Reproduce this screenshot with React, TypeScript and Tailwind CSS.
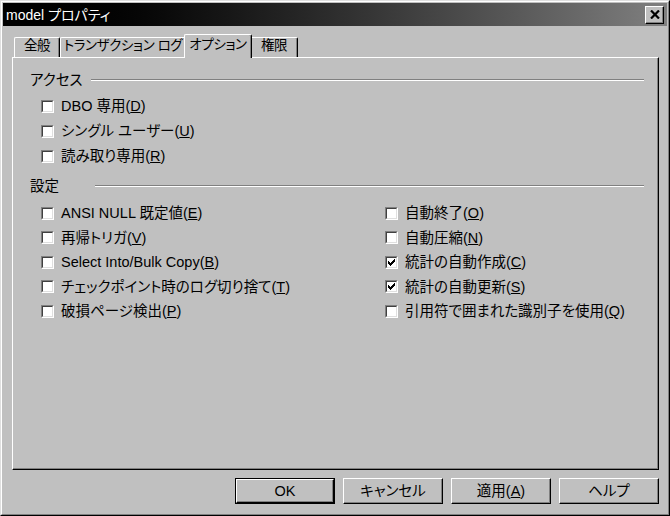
import React from 'react';

const Check: React.FC<{ checked?: boolean }> = ({ checked }) => (
  <span className="flex w-[13px] h-[13px] shrink-0 border border-t-[#808080] border-l-[#808080] border-r-white border-b-white">
    <span className="flex flex-1 items-center justify-center bg-white border border-t-[#404040] border-l-[#404040] border-r-[#dfdfdf] border-b-[#dfdfdf]">
      {checked && (
        <svg width="7" height="7" viewBox="0 0 7 7" shapeRendering="crispEdges">
          <path d="M0 2 L2 4 L6 0 L7 0 L7 3 L2 7 L0 5 Z" fill="#000" />
        </svg>
      )}
    </span>
  </span>
);

const Row: React.FC<{ checked?: boolean; h: string; children: React.ReactNode }> = ({ checked, h, children }) => (
  <div className={`flex items-center ${h}`}>
    <Check checked={checked} />
    <span className="ml-[7px] whitespace-nowrap">{children}</span>
  </div>
);

const GroupHeader: React.FC<{ label: string; lineLeft: string }> = ({ label, lineLeft }) => (
  <div className="flex items-center h-[16px]">
    <span className="whitespace-nowrap">{label}</span>
    <div className={`flex-1 ${lineLeft} border-t border-t-[#808080] border-b border-b-white`} />
  </div>
);

const Tab: React.FC<{ label: string; w: string; selected?: boolean }> = ({ label, w, selected }) =>
  selected ? (
    <div className={`relative z-10 -mx-[2px] -mb-[1px] h-[24px] ${w} flex items-start justify-center pt-[3px] whitespace-nowrap bg-[#c0c0c0] border-l border-t border-l-white border-t-white border-r border-r-black shadow-[inset_-1px_0_#808080] rounded-tl-[2px] rounded-tr-[2px]`}>
      {label}
    </div>
  ) : (
    <div className={`h-[20px] ${w} flex items-start justify-center pt-[1px] whitespace-nowrap border-l border-t border-l-white border-t-white border-r border-r-black shadow-[inset_-1px_0_#808080] rounded-tl-[2px] rounded-tr-[2px]`}>
      {label}
    </div>
  );

const Button: React.FC<{ children: React.ReactNode; isDefault?: boolean }> = ({ children, isDefault }) =>
  isDefault ? (
    <div className="flex w-[100px] h-[26px] border border-black">
      <div className="flex flex-1 items-center justify-center border border-t-white border-l-white border-r-black border-b-black shadow-[inset_-1px_-1px_#808080]">
        {children}
      </div>
    </div>
  ) : (
    <div className="flex w-[100px] h-[26px] items-center justify-center border border-t-white border-l-white border-r-black border-b-black shadow-[inset_-1px_-1px_#808080]">
      {children}
    </div>
  );

export default function App() {
  return (
    <div className="w-[670px] h-[516px] bg-[#c0c0c0] text-black text-[14.5px] leading-none [font-feature-settings:'palt'] font-['Liberation_Sans','Noto_Sans_CJK_JP','Noto_Sans_CJK_SC',sans-serif] border border-t-[#dfdfdf] border-l-[#dfdfdf] border-r-black border-b-black">
      <div className="flex flex-col h-full p-[1px] border border-t-white border-l-white border-r-[#808080] border-b-[#808080]">
        {/* title bar */}
        <div className="flex items-center h-[23px] pl-[3px] pr-[3px] bg-linear-to-r from-[#000000] to-[#808080]">
          <span className="text-white text-[14px] whitespace-nowrap">model プロパティ</span>
          <div className="ml-auto flex w-[19px] h-[18px] items-center justify-center bg-[#c0c0c0] border border-t-white border-l-white border-r-black border-b-black shadow-[inset_-1px_-1px_#808080]">
            <svg width="10" height="9" viewBox="0 0 10 9">
              <path d="M1 0.5 L9 8.5 M9 0.5 L1 8.5" stroke="#000" strokeWidth="2.2" />
            </svg>
          </div>
        </div>

        {/* tabs */}
        <div className="flex items-end h-[24px] mt-[7px] pl-[11px] text-[13.5px] tracking-[-0.4px]">
          <Tab label="全般" w="w-[46px]" />
          <Tab label="トランザクション ログ" w="w-[126px]" />
          <Tab label="オプション" w="w-[68px]" selected />
          <Tab label="権限" w="w-[48px]" />
        </div>

        {/* panel */}
        <div className="ml-[9px] mr-[8px] h-[413px] border border-t-white border-l-white border-r-black border-b-black shadow-[inset_-1px_-1px_#808080] pt-[14px] pl-[17px] pr-[14px]">
          <GroupHeader label="アクセス" lineLeft="ml-[8px]" />
          <div className="ml-[11px] mt-[6px]">
            <Row h="h-[25px]">DBO 専用(<u>D</u>)</Row>
            <Row h="h-[25px]">シングル ユーザー(<u>U</u>)</Row>
            <Row h="h-[25px]">読み取り専用(<u>R</u>)</Row>
          </div>

          <div className="mt-[9px]">
            <GroupHeader label="設定" lineLeft="ml-[36px]" />
          </div>
          <div className="ml-[11px] mt-[7px] grid grid-cols-[344px_1fr]">
            <div>
              <Row h="h-[24.5px]">ANSI NULL 既定値(<u>E</u>)</Row>
              <Row h="h-[24.5px]">再帰トリガ(<u>V</u>)</Row>
              <Row h="h-[24.5px]">Select Into/Bulk Copy(<u>B</u>)</Row>
              <Row h="h-[24.5px]">チェックポイント時のログ切り捨て(<u>T</u>)</Row>
              <Row h="h-[24.5px]">破損ページ検出(<u>P</u>)</Row>
            </div>
            <div>
              <Row h="h-[24.5px]">自動終了(<u>O</u>)</Row>
              <Row h="h-[24.5px]">自動圧縮(<u>N</u>)</Row>
              <Row h="h-[24.5px]" checked>統計の自動作成(<u>C</u>)</Row>
              <Row h="h-[24.5px]" checked>統計の自動更新(<u>S</u>)</Row>
              <Row h="h-[24.5px]">引用符で囲まれた識別子を使用(<u>Q</u>)</Row>
            </div>
          </div>
        </div>

        {/* buttons */}
        <div className="flex justify-end gap-[8px] mt-[8px] pr-[8px]">
          <Button isDefault>OK</Button>
          <Button>キャンセル</Button>
          <Button>適用(<u>A</u>)</Button>
          <Button>ヘルプ</Button>
        </div>
      </div>
    </div>
  );
}
